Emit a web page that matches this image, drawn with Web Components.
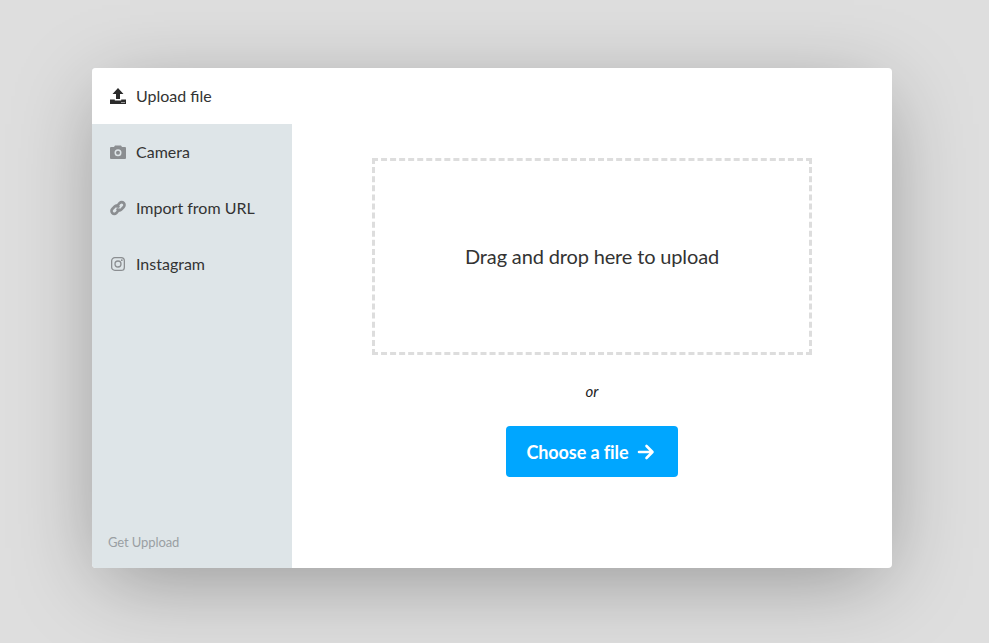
<!DOCTYPE html>
<html><head><meta charset="utf-8">
<style>
html,body{margin:0;height:100%;overflow:hidden}
body{background:#dedede;font-family:Lato,sans-serif;color:#333}
</style></head><body>
<up-page>
<up-modal>
<up-tab slot="tabs" label="Upload file" active><svg viewBox="0 0 16 16" width="16" height="16"><path fill="#2b2b2b" d="M8 0 13.500 6H10V11H6V6H2.500Z"/><path fill="#2b2b2b" fill-rule="evenodd" d="M0 11.500H4.800V12.500H11.200V11.500H16V16H0ZM11.500 14h1v1h-1ZM13.500 14h1v1h-1Z"/></svg></up-tab>
<up-tab slot="tabs" label="Camera"><svg viewBox="0 0 16 16" width="16" height="16"><path fill="#8b8e91" fill-rule="evenodd" d="M5 1.500H11L12 3H15A1 1 0 0 1 16 4V14A1 1 0 0 1 15 15H1A1 1 0 0 1 0 14V4A1 1 0 0 1 1 3H4ZM8 5.200A3.500 3.500 0 1 0 8 12.200A3.500 3.500 0 1 0 8 5.200ZM8 6.700A2 2 0 1 1 8 10.700A2 2 0 1 1 8 6.700Z"/></svg></up-tab>
<up-tab slot="tabs" label="Import from URL"><svg viewBox="0 0 16 16" width="16" height="16"><g fill="none" stroke="#8b8e91" stroke-width="2.600" stroke-linecap="round"><path d="M6.800 6.300 9.700 3A2.800 2.800 0 0 1 13.700 7L11.300 9.500A2.800 2.800 0 0 1 7.500 9.500"/><path d="M9.200 9.700 6.300 13A2.800 2.800 0 0 1 2.300 9L4.700 6.500A2.800 2.800 0 0 1 8.500 6.500"/></g></svg></up-tab>
<up-tab slot="tabs" label="Instagram"><svg viewBox="0 0 16 16" width="16" height="16"><g fill="none" stroke="#8b8e91" stroke-width="1.300"><rect x="1.650" y="1.650" width="12.700" height="12.700" rx="3.200"/><circle cx="8" cy="8" r="3"/></g><circle cx="11.800" cy="4.200" r=".9" fill="#8b8e91"/></svg></up-tab>
<span slot="footer">Get Uppload</span>
<up-dropzone>Drag and drop here to upload</up-dropzone>
<up-or>or</up-or>
<up-button>Choose a file</up-button>
</up-modal>
</up-page>
<script>
function def(name,html,setup){
  customElements.define(name,class extends HTMLElement{
    constructor(){super();this.attachShadow({mode:'open'}).innerHTML=html;}
    connectedCallback(){if(setup)setup(this);}
  });
}
def('up-page',`<style>:host{display:block;height:100vh;box-sizing:border-box;padding:68px 0 0 92px}</style><slot></slot>`);
def('up-modal',`<style>
:host{display:flex;width:800px;height:500px;background:#fff;border-radius:4px;box-shadow:0 18px 80px -10px rgba(0,0,0,.34)}
aside{width:200px;flex:none;display:flex;flex-direction:column;background:#dee5e8;border-radius:4px 0 0 4px}
.tabs{display:flex;flex-direction:column}
.foot{margin-top:auto;padding:0 16px 18px;font-size:13px;line-height:16px;letter-spacing:-.1px;color:#9a9fa3}
main{flex:1;display:flex;flex-direction:column;align-items:center;padding-top:90px}
</style><aside><div class="tabs"><slot name="tabs"></slot></div><div class="foot"><slot name="footer"></slot></div></aside><main><slot></slot></main>`);
def('up-tab',`<style>
:host{display:flex;align-items:center;gap:10px;height:56px;padding:0 0 0 18px;font-size:16px;color:#333}
:host([active]){background:#fff;border-radius:4px 0 0 0}
::slotted(svg){flex:none;display:block}
#l{margin-bottom:2px}
</style><slot></slot><span id="l"></span>`,el=>{el.shadowRoot.getElementById('l').textContent=el.getAttribute('label');});
def('up-dropzone',`<style>
:host{display:flex;align-items:center;justify-content:center;box-sizing:border-box;width:440px;height:197px;padding-bottom:1px;border:3px dashed #ddd;font-size:20px;letter-spacing:-.15px;color:#333}
</style><slot></slot>`);
def('up-or',`<style>:host{display:block;margin-top:27px;font-size:15px;line-height:18px;font-style:italic;color:#222}</style><slot></slot>`);
def('up-button',`<style>
:host{display:flex;align-items:center;justify-content:center;gap:9px;box-sizing:border-box;width:172px;height:51px;margin-top:26px;padding-right:2px;background:#00a6ff;border-radius:4px;color:#fff;font-size:18px;font-weight:700;letter-spacing:-.1px}
svg{display:block}
</style><slot></slot><svg viewBox="0 0 18 16" width="18" height="16"><path d="M2 8H15M9.500 2 15.500 8 9.500 14" fill="none" stroke="#fff" stroke-width="2.600" stroke-linecap="round" stroke-linejoin="round"/></svg>`);
</script>
</body></html>
